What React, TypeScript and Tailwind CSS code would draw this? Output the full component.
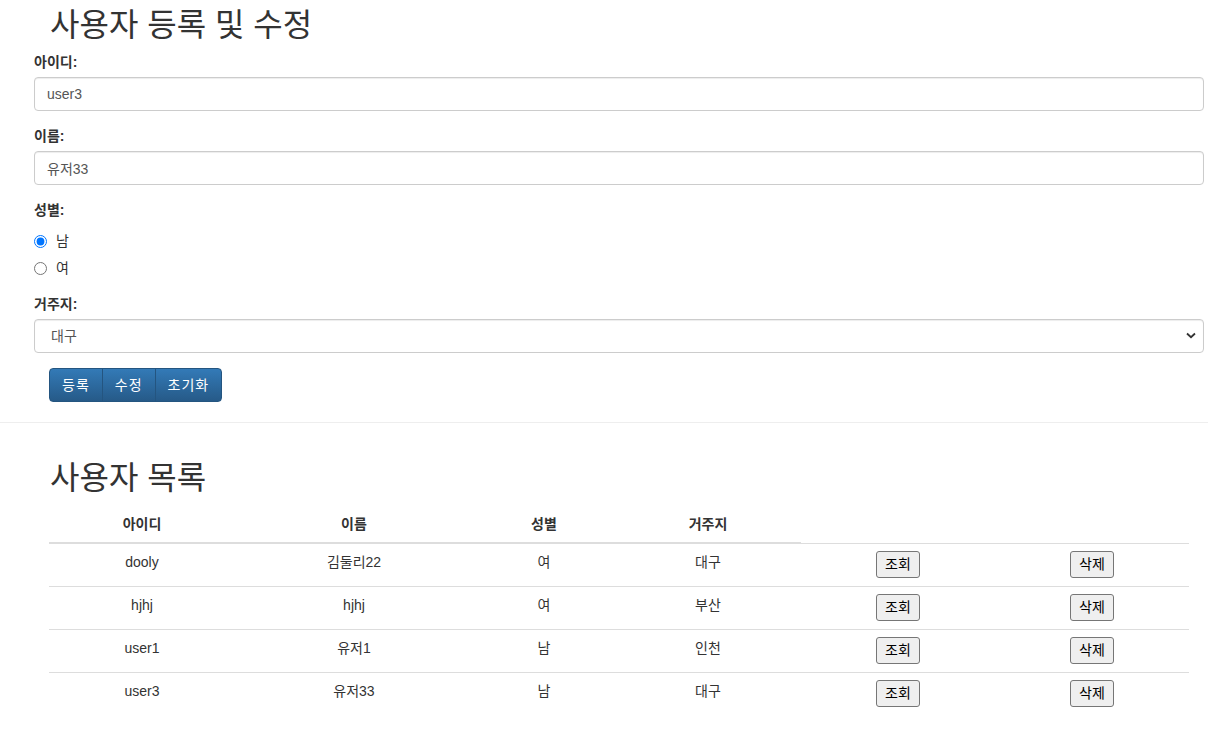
import React from "react";

const FONT = { fontFamily: '"Liberation Sans", "Noto Sans CJK KR", sans-serif' };

const USERS = [
  { id: "dooly", name: "김둘리22", gender: "여", addr: "대구" },
  { id: "hjhj", name: "hjhj", gender: "여", addr: "부산" },
  { id: "user1", name: "유저1", gender: "남", addr: "인천" },
  { id: "user3", name: "유저33", gender: "남", addr: "대구" },
];

function Label({ children }: { children: React.ReactNode }) {
  return <label className="mb-[5px] block text-[14px] font-bold leading-5 text-[#333]">{children}</label>;
}

function TextInput({ value }: { value: string }) {
  return (
    <input
      type="text"
      defaultValue={value}
      className="block h-[34px] w-full rounded-[4px] border border-[#ccc] bg-white px-[12px] text-[14px] leading-5 text-[#555] shadow-[inset_0_1px_1px_rgba(0,0,0,0.075)] outline-none"
    />
  );
}

function Radio({ label, checked }: { label: string; checked?: boolean }) {
  return (
    <label className="flex h-5 items-center gap-[9px] text-[14px] leading-5 text-[#333]">
      <input type="radio" name="gender" defaultChecked={checked} className="m-0 h-[13px] w-[13px] accent-[#0075ff]" />
      {label}
    </label>
  );
}

function GroupButton({ children, pos }: { children: React.ReactNode; pos: "first" | "mid" | "last" }) {
  const radius = pos === "first" ? "rounded-l-[4px]" : pos === "last" ? "rounded-r-[4px]" : "";
  const border = pos === "first" ? "" : "-ml-px";
  return (
    <button
      type="button"
      className={`h-[34px] border border-[#245580] bg-gradient-to-b from-[#337ab7] to-[#265a88] px-[12px] text-[14px] leading-5 tracking-[1px] text-white ${radius} ${border}`}
    >
      {children}
    </button>
  );
}

function CellButton({ children }: { children: React.ReactNode }) {
  return (
    <button
      type="button"
      className="h-[27px] rounded-[3px] border border-[#767676] bg-[#efefef] px-[8px] text-[14px] leading-5 text-black"
    >
      {children}
    </button>
  );
}

export default function App() {
  return (
    <div className="min-h-[745px] bg-white text-[14px] text-[#333]" style={FONT}>
      <div className="ml-[34px] mr-[4px] pt-[8px]">
        <h2 className="mb-[9px] pl-[16px] text-[32px] font-normal leading-[35px] text-[#333]">사용자 등록 및 수정</h2>

        <div className="mb-[15px]">
          <Label>아이디:</Label>
          <TextInput value="user3" />
        </div>
        <div className="mb-[15px]">
          <Label>이름:</Label>
          <TextInput value="유저33" />
        </div>
        <div className="mb-[16px]">
          <Label>성별:</Label>
          <div className="mt-[11px] flex flex-col gap-[7px]">
            <Radio label="남" checked />
            <Radio label="여" />
          </div>
        </div>
        <div className="mb-[15px]">
          <Label>거주지:</Label>
          <div className="relative">
            <select
              defaultValue="대구"
              className="block h-[34px] w-full appearance-none rounded-[4px] border border-[#ccc] bg-white pl-[16px] text-[14px] leading-5 text-[#555] shadow-[inset_0_1px_1px_rgba(0,0,0,0.075)] outline-none"
            >
              <option>서울</option>
              <option>부산</option>
              <option>대구</option>
              <option>인천</option>
            </select>
            <svg
              className="pointer-events-none absolute right-[8px] top-[13px]"
              width="10"
              height="7"
              viewBox="0 0 10 7"
              fill="none"
            >
              <path d="M1 1.5 5 5.2 9 1.5" stroke="#333" strokeWidth="1.8" />
            </svg>
          </div>
        </div>

        <div className="flex pl-[15px]">
          <GroupButton pos="first">등록</GroupButton>
          <GroupButton pos="mid">수정</GroupButton>
          <GroupButton pos="last">초기화</GroupButton>
        </div>
      </div>

      <hr className="mt-[20px] border-0 border-t border-[#eee]" />

      <div className="ml-[49px] mr-[19px] pt-[38px]">
        <h2 className="mb-[10px] pl-px text-[32px] font-normal leading-[35px] text-[#333]">사용자 목록</h2>
        <table className="w-full table-fixed border-collapse">
          <colgroup>
            <col className="w-[186px]" />
            <col className="w-[238px]" />
            <col className="w-[142px]" />
            <col className="w-[186px]" />
            <col className="w-[194px]" />
            <col />
          </colgroup>
          <thead>
            <tr>
              {["아이디", "이름", "성별", "거주지"].map((h) => (
                <th key={h} className="border-b-2 border-[#ddd] p-[8px] text-center align-bottom font-bold leading-5">
                  {h}
                </th>
              ))}
            </tr>
          </thead>
          <tbody>
            {USERS.map((u) => (
              <tr key={u.id} className="border-t border-[#ddd]">
                <td className="p-[8px] text-center align-top leading-5">{u.id}</td>
                <td className="p-[8px] text-center align-top leading-5">{u.name}</td>
                <td className="p-[8px] text-center align-top leading-5">{u.gender}</td>
                <td className="p-[8px] text-center align-top leading-5">{u.addr}</td>
                <td className="px-[8px] pb-[8px] pt-[7px] text-center align-top leading-5">
                  <CellButton>조회</CellButton>
                </td>
                <td className="px-[8px] pb-[8px] pt-[7px] text-center align-top leading-5">
                  <CellButton>삭제</CellButton>
                </td>
              </tr>
            ))}
          </tbody>
        </table>
      </div>
    </div>
  );
}
